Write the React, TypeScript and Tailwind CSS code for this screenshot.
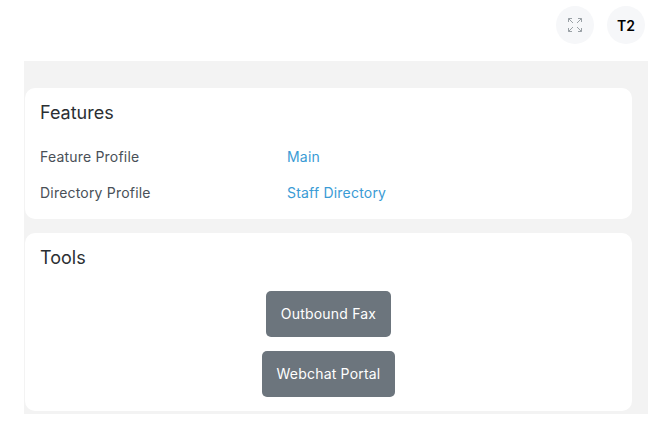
const FONT = "font-['Inter','Noto_Sans',sans-serif]"

const ROWS = [
  { label: 'Feature Profile', value: 'Main' },
  { label: 'Directory Profile', value: 'Staff Directory' },
]

const TOOLS = ['Outbound Fax', 'Webchat Portal']

function ExpandIcon() {
  return (
    <svg viewBox="0 0 16 16" className="w-[16px] h-[16px]" fill="none" stroke="#9aa1a6" strokeWidth="1">
      <path d="M1.5 1.5 6 6M1.5 1.5h3.5M1.5 1.5V5" />
      <path d="M14.5 1.5 10 6M14.5 1.5H11M14.5 1.5V5" />
      <path d="M1.5 14.5 6 10M1.5 14.5H5M1.5 14.5V11" />
      <path d="M14.5 14.5 10 10M14.5 14.5H11M14.5 14.5V11" />
    </svg>
  )
}

export default function App() {
  return (
    <div className={`${FONT} w-[665px] h-[424px] bg-white overflow-hidden pl-[24px] pr-[17px]`}>
      {/* Top bar */}
      <div className="h-[61px] flex justify-end items-start gap-[13px] pt-[6px] pr-[3px]">
        <button className="w-[38px] h-[38px] rounded-full bg-[#f6f7f9] flex items-center justify-center">
          <ExpandIcon />
        </button>
        <button className="w-[38px] h-[38px] rounded-full bg-[#f6f7f9] flex items-center justify-center text-[14px] font-semibold text-black">
          T2
        </button>
      </div>

      {/* Content */}
      <div className="bg-[#f3f3f3] pt-[27px] pl-[1px] pr-[16px] pb-[3px] flex flex-col gap-[14px]">
        <section className="bg-white rounded-[10px] h-[131px] pl-[15px] pt-[14px]">
          <h2 className="text-[18px] leading-[22px] text-[#2b2f33]">Features</h2>
          <div className="mt-[23px] flex flex-col gap-[16px]">
            {ROWS.map((r) => (
              <div key={r.label} className="flex text-[14px] leading-[20px] tracking-[0.2px]">
                <span className="w-[247px] text-[#495057]">{r.label}</span>
                <span className="text-[#3a9bd5]">{r.value}</span>
              </div>
            ))}
          </div>
        </section>

        <section className="bg-white rounded-[10px] h-[178px] pt-[14px]">
          <h2 className="pl-[15px] text-[18px] leading-[22px] text-[#2b2f33]">Tools</h2>
          <div className="mt-[22px] flex flex-col items-center gap-[14px]">
            {TOOLS.map((t) => (
              <button
                key={t}
                className="h-[46px] px-[15px] pb-[1px] rounded-[5px] bg-[#6c757d] text-white text-[14px] tracking-[0.2px]"
              >
                {t}
              </button>
            ))}
          </div>
        </section>
      </div>
    </div>
  )
}
